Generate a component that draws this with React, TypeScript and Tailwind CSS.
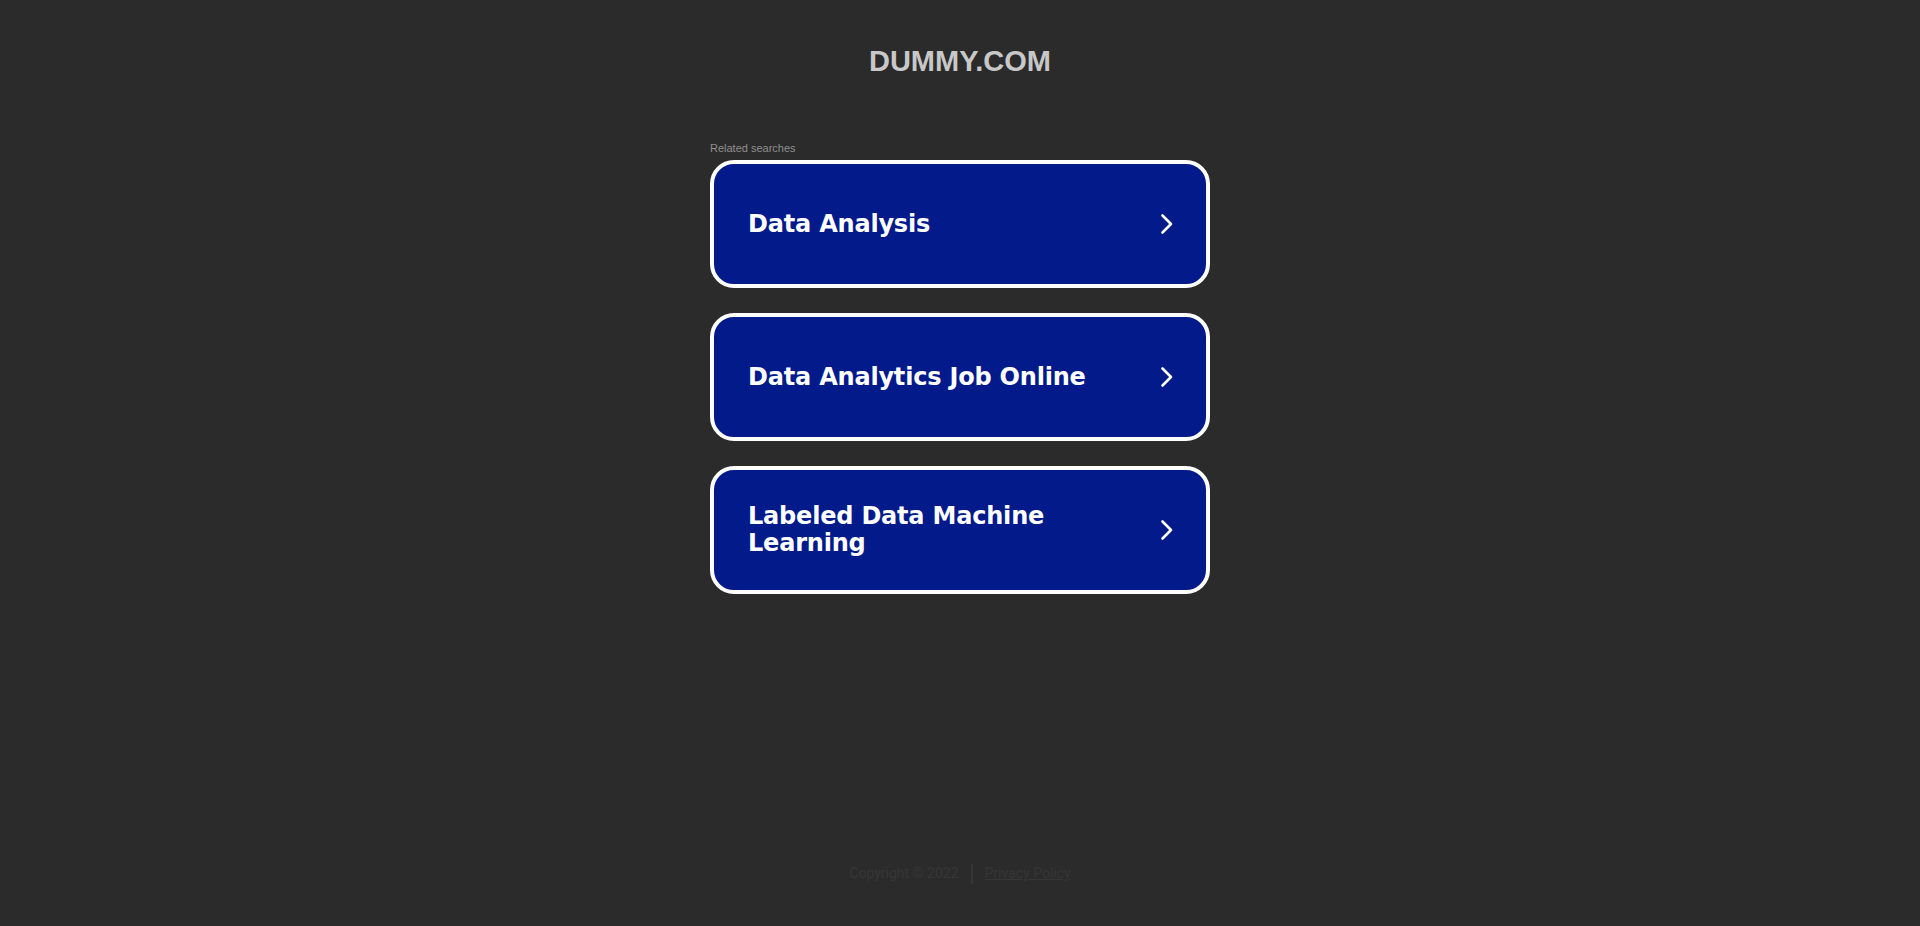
const SEARCHES = ["Data Analysis", "Data Analytics Job Online", "Labeled Data Machine Learning"];

function Chevron() {
  return (
    <svg width="14" height="22" viewBox="0 0 14 22" fill="none" className="flex-shrink-0">
      <path d="M2.5 2.5 L11 11 L2.5 19.5" stroke="white" strokeWidth="2.6" strokeLinecap="round" strokeLinejoin="round" />
    </svg>
  );
}

export default function App() {
  return (
    <div className="h-[926px] overflow-hidden bg-[#2b2b2b] flex flex-col items-center font-['Liberation_Sans',Arial,sans-serif]">
      <h1 className="mt-[45px] text-[29px] leading-[32px] font-bold text-[#c8c8c8]">DUMMY.COM</h1>

      <div className="w-[500px] mt-[65px]">
        <p className="text-[11px] leading-[12px] text-[#8f8f8f] mb-[6px]">Related searches</p>
        <div className="flex flex-col gap-[25px]">
          {SEARCHES.map((s) => (
            <a
              key={s}
              href="#"
              className="h-[128px] flex items-center justify-between rounded-[24px] border-[4px] border-white bg-[#021a8a] pl-[34px] pr-[32px]"
            >
              <span className="w-[370px] text-white font-bold text-[24px] leading-[27px] tracking-[-0.2px] font-['DejaVu_Sans',Verdana,sans-serif]">
                {s}
              </span>
              <Chevron />
            </a>
          ))}
        </div>
      </div>

      <div className="mt-auto mb-[42px] flex items-center gap-[12px] text-[14px] text-[#363636] font-['Roboto',sans-serif]">
        <span>Copyright © 2022</span>
        <span className="w-[2px] h-[20px] bg-[#363636]" />
        <a href="#" className="underline">Privacy Policy</a>
      </div>
    </div>
  );
}
